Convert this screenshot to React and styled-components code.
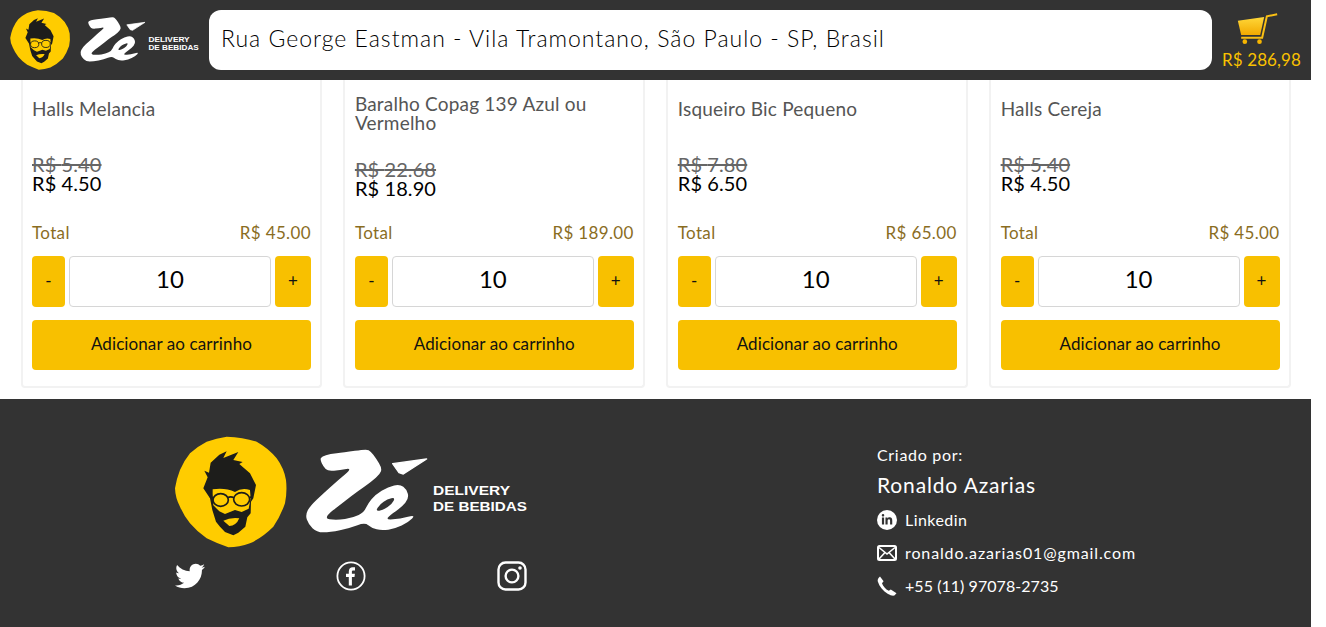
import React from 'react';
import styled, { createGlobalStyle } from 'styled-components';
import { FaTwitter, FaLinkedinIn } from 'react-icons/fa';

const FONT = `Lato, "Noto Sans", sans-serif`;

const products = [
  { name: 'Halls Melancia', oldPrice: '5.40', price: '4.50', total: '45.00' },
  { name: 'Baralho Copag 139 Azul ou Vermelho', oldPrice: '22.68', price: '18.90', total: '189.00' },
  { name: 'Isqueiro Bic Pequeno', oldPrice: '7.80', price: '6.50', total: '65.00' },
  { name: 'Halls Cereja', oldPrice: '5.40', price: '4.50', total: '45.00' },
];

// brush outline of the logo letters, smoothed below
const BRUSH_LETTERS = [
  [60, 58], [66, 50], [90, 42], [130, 38], [200, 27], [212, 34], [228, 55], [246, 85], [240, 102], [215, 125],
  [175, 152], [130, 187], [68, 235], [110, 241], [160, 233], [192, 217], [204, 190], [225, 165], [265, 140], [300, 133],
  [320, 148], [327, 175], [305, 202], [270, 225], [258, 240], [300, 236], [348, 224], [325, 247], [285, 266], [245, 272],
  [215, 264], [195, 247], [150, 264], [90, 277], [50, 277], [25, 252], [16, 225], [30, 198], [70, 160], [115, 120],
  [158, 84], [120, 90], [84, 94], [70, 80],
];

const BRUSH_HOLE = [[226, 214], [240, 192], [262, 178], [286, 172], [276, 192], [250, 210]];

function smooth(points) {
  const mid = (a, b) => `${(a[0] + b[0]) / 2} ${(a[1] + b[1]) / 2}`;
  let d = `M${mid(points[points.length - 1], points[0])}`;
  points.forEach((p, i) => {
    d += ` Q${p[0]} ${p[1]} ${mid(p, points[(i + 1) % points.length])}`;
  });
  return d + 'Z';
}

const GlobalStyle = createGlobalStyle`
  html, body {
    margin: 0;
    background: #fff;
    overflow: hidden;
  }

  body {
    font-family: ${FONT};
  }
`;

const Page = styled.div`
  width: 1311px;
  height: 627px;
  display: flex;
  flex-direction: column;
`;

const Header = styled.header`
  height: 80px;
  flex: none;
  background: #333;
  display: flex;
  align-items: center;
  gap: 10px;
  padding: 0 10px;
`;

const Search = styled.div`
  flex: 1;
  height: 60px;
  box-sizing: border-box;
  display: flex;
  align-items: center;
  padding: 0 0 4px 12px;
  background: #fff;
  border-radius: 12px;
  color: #000;
  font-size: 23px;
  font-weight: 300;
  letter-spacing: 1px;
  white-space: nowrap;
`;

const Cart = styled.div`
  width: 79px;
  display: flex;
  flex-direction: column;
  align-items: center;
  gap: 4px;
  padding-top: 3px;
  color: #f9c100;
  font-size: 17px;
  letter-spacing: 0.1px;
  white-space: nowrap;
`;

const CartSvg = styled.svg`
  margin-right: 8px;
`;

const Products = styled.main`
  flex: none;
  display: grid;
  grid-template-columns: repeat(4, 1fr);
  gap: 21.5px;
  padding: 0 20.5px 11px;
`;

const Card = styled.article`
  height: 308px;
  box-sizing: border-box;
  display: flex;
  flex-direction: column;
  padding: 4px 9px 16px 9.5px;
  border: 2px solid #f2f2f2;
  border-top: none;
  border-radius: 0 0 4px 4px;
`;

const Name = styled.h3`
  min-height: 48px;
  box-sizing: border-box;
  margin: 0;
  padding: 10px 0;
  display: flex;
  align-items: center;
  color: #555;
  font-size: 19px;
  font-weight: 400;
  line-height: 19px;
  letter-spacing: 0.2px;
`;

const Prices = styled.div`
  flex: 1;
  display: flex;
  flex-direction: column;
  justify-content: center;
  font-size: 20px;
  line-height: 19px;
  letter-spacing: 0.1px;
`;

const OldPrice = styled.s`
  color: #666;
`;

const Price = styled.span`
  color: #000;
`;

const TotalRow = styled.div`
  height: 32px;
  display: flex;
  align-items: center;
  justify-content: space-between;
  margin: 1px 0 8px;
  color: #8a6d1f;
  font-size: 17px;
  letter-spacing: 0.35px;
`;

const Stepper = styled.div`
  height: 51px;
  display: grid;
  grid-template-columns: 33px 1fr 36px;
  gap: 4px;
  margin-bottom: 13px;
`;

const YellowButton = styled.button`
  border: none;
  border-radius: 4px;
  padding: 0 0 3px;
  background: #f8c000;
  color: #111;
  font-family: ${FONT};
  font-size: 17px;
  letter-spacing: 0.1px;
`;

const AddButton = styled(YellowButton)`
  height: 50px;
`;

const Quantity = styled.div`
  box-sizing: border-box;
  display: flex;
  align-items: center;
  justify-content: center;
  padding-bottom: 7px;
  border: 1px solid #d6d6d6;
  border-radius: 4px;
  color: #000;
  font-size: 24px;
`;

const Footer = styled.footer`
  flex: 1;
  background: #333;
  display: grid;
  grid-template-columns: 702px 1fr;
  padding: 37px 0 0 175px;
  color: #fff;
`;

const Brand = styled.div`
  width: 352px;
  display: flex;
  flex-direction: column;
  gap: 13px;
`;

const Socials = styled.div`
  height: 30px;
  display: flex;
  justify-content: space-between;
  align-items: center;
`;

const Contact = styled.div`
  display: flex;
  flex-direction: column;
  padding-top: 9px;
  font-size: 16px;
`;

const CreatedBy = styled.div`
  height: 20px;
  line-height: 20px;
  letter-spacing: 0.7px;
`;

const Author = styled.div`
  height: 34px;
  margin: 3px 0 1px;
  line-height: 34px;
  font-size: 21px;
  letter-spacing: 0.85px;
`;

const ContactRow = styled.div`
  height: 33px;
  display: flex;
  align-items: center;
  gap: 8px;
  white-space: nowrap;
  letter-spacing: ${props => props.$tracking}px;
`;

const IconSlot = styled.span`
  width: 20px;
  height: 20px;
  flex: none;
  display: flex;
  align-items: center;
  justify-content: center;
`;

const LinkedinBadge = styled(IconSlot)`
  border-radius: 50%;
  background: #fff;
  color: #333;
`;

const LogoTextLine = styled.text`
  fill: #fff;
  font-family: "Liberation Sans", sans-serif;
  font-size: 12px;
  font-weight: 700;
`;

function Logo({ width, height }) {
  return (
    <svg width={width} height={height} viewBox="0 0 352 112" style={{ display: 'block', flex: 'none' }}>
      <g transform="translate(-5 -6) scale(.3333)">
        <path fill="#fc0" d="M170 20 Q220 22 260 35 Q296 55 320 85 Q342 115 348 150 Q352 185 345 220 Q332 258 310 290 Q278 322 240 340 Q208 352 175 352 Q140 340 110 325 Q82 306 60 280 Q42 258 30 230 Q16 205 15 175 Q20 145 30 120 Q42 92 60 70 Q84 48 110 35 Q140 24 170 20Z" />
        <path fill="#1d1d1b" d="M148 74 L170 64 L160 84 L205 66 L190 90 L218 96 L208 102 L240 130 L258 165 L250 205 L243 215 L242 250 L232 262 L226 290 L205 308 L190 316 L165 306 L150 290 L138 275 L127 240 L120 205 L100 175 L113 142 L103 122 L117 128 L122 98Z" />
        <path fill="#fc0" d="M128 192 L128 178 Q165 172 195 186 Q215 172 240 180 L242 205 L236 236 L215 246 L195 240 L165 252 L148 244 L130 226Z" />
        <g fill="#fc0" stroke="#1d1d1b" strokeWidth="5">
          <ellipse cx="152" cy="210" rx="23" ry="19" />
          <ellipse cx="215" cy="208" rx="24" ry="20" />
          <path fill="none" d="M173 203 Q182 198 192 203 M120 200 L130 204 M238 203 L248 200" />
        </g>
        <path fill="#fc0" d="M160 272 Q180 262 208 265 Q198 288 178 288Z" />
      </g>
      <g transform="translate(125 4) scale(.3333)">
        <path fill="#fff" fillRule="evenodd" d={`${smooth(BRUSH_LETTERS)} ${smooth(BRUSH_HOLE)}`} />
        <path fill="#fff" stroke="#fff" strokeWidth="4" strokeLinejoin="round" d="M278 71 L380 57 L310 102 L297 98Z" />
      </g>
      <LogoTextLine x="258" y="59" textLength="77" lengthAdjust="spacingAndGlyphs">DELIVERY</LogoTextLine>
      <LogoTextLine x="258" y="75" textLength="94" lengthAdjust="spacingAndGlyphs">DE BEBIDAS</LogoTextLine>
    </svg>
  );
}

function CartIcon() {
  return (
    <CartSvg width="41" height="32" viewBox="38 24 122 96">
      <defs>
        <linearGradient id="cartGold" x1="0" y1="0" x2="0" y2="1">
          <stop offset="0" stopColor="#ffd83a" />
          <stop offset="1" stopColor="#f2a900" />
        </linearGradient>
      </defs>
      <path fill="url(#cartGold)" d="M40 47 L119 36 L107 90 L50 90Z" />
      <path fill="none" stroke="#f9bf14" strokeWidth="6" d="M158 28 L127 34 L113 98 L50 98" />
      <circle cx="61" cy="110" r="7" fill="#f7b500" />
      <circle cx="105" cy="110" r="7" fill="#f7b500" />
    </CartSvg>
  );
}

function FacebookIcon() {
  return (
    <svg width="30" height="30" viewBox="0 0 30 30">
      <circle cx="15" cy="15" r="13.6" fill="none" stroke="#fff" strokeWidth="1.8" />
      <path fill="#fff" d="M12.8 24.5 V16 H10 V12.8 H12.8 V10.4 C12.8 7.8 14.4 6.2 16.7 6.2 C17.8 6.2 18.7 6.3 19 6.3 V9.4 H17.3 C16 9.4 15.9 10 15.9 10.8 V12.8 H18.9 L18.5 16 H15.9 V24.5Z" />
    </svg>
  );
}

function InstagramIcon() {
  return (
    <svg width="30" height="30" viewBox="0 0 30 30">
      <rect x="1.5" y="1.5" width="27" height="27" rx="7" fill="none" stroke="#fff" strokeWidth="2.4" />
      <circle cx="15" cy="15" r="6.4" fill="none" stroke="#fff" strokeWidth="2.4" />
      <circle cx="23" cy="7" r="1.8" fill="#fff" />
    </svg>
  );
}

function MailIcon() {
  return (
    <svg width="20" height="16" viewBox="0 0 20 16">
      <rect x="1" y="1" width="18" height="14" rx="1.5" fill="none" stroke="#fff" strokeWidth="2" />
      <path fill="none" stroke="#fff" strokeWidth="1.6" d="M2 2.5 L10 9 L18 2.5 M2 14 L8 7.5 M18 14 L12 7.5" />
    </svg>
  );
}

function PhoneIcon() {
  return (
    <svg width="20" height="20" viewBox="0 0 20 20">
      <path fill="#fff" d="M3 0.5 L6.6 5.2 L5 7.2 C6 10.2 8.6 13.2 11.8 14.8 L13.8 13.6 L19.5 17.2 L17.4 19.6 C15 20 13 19 11 18 C6 15.2 2.4 10.6 0.8 5.6 C0.4 3.8 1 2 3 0.5Z" />
    </svg>
  );
}

function ProductCard({ product }) {
  return (
    <Card>
      <Name>{product.name}</Name>
      <Prices>
        <OldPrice>R$ {product.oldPrice}</OldPrice>
        <Price>R$ {product.price}</Price>
      </Prices>
      <TotalRow>
        <span>Total</span>
        <span>R$ {product.total}</span>
      </TotalRow>
      <Stepper>
        <YellowButton>-</YellowButton>
        <Quantity>10</Quantity>
        <YellowButton>+</YellowButton>
      </Stepper>
      <AddButton>Adicionar ao carrinho</AddButton>
    </Card>
  );
}

export default function App() {
  return (
    <Page>
      <GlobalStyle />
      <Header>
        <Logo width={189} height={60} />
        <Search>Rua George Eastman - Vila Tramontano, São Paulo - SP, Brasil</Search>
        <Cart>
          <CartIcon />
          R$ 286,98
        </Cart>
      </Header>
      <Products>
        {products.map(product => (
          <ProductCard key={product.name} product={product} />
        ))}
      </Products>
      <Footer>
        <Brand>
          <Logo width={352} height={112} />
          <Socials>
            <FaTwitter size={30} color="#fff" />
            <FacebookIcon />
            <InstagramIcon />
          </Socials>
        </Brand>
        <Contact>
          <CreatedBy>Criado por:</CreatedBy>
          <Author>Ronaldo Azarias</Author>
          <ContactRow $tracking={0.45}>
            <LinkedinBadge><FaLinkedinIn size={12} /></LinkedinBadge>
            Linkedin
          </ContactRow>
          <ContactRow $tracking={0.88}>
            <IconSlot><MailIcon /></IconSlot>
            ronaldo.azarias01@gmail.com
          </ContactRow>
          <ContactRow $tracking={0.05}>
            <IconSlot><PhoneIcon /></IconSlot>
            +55 (11) 97078-2735
          </ContactRow>
        </Contact>
      </Footer>
    </Page>
  );
}
